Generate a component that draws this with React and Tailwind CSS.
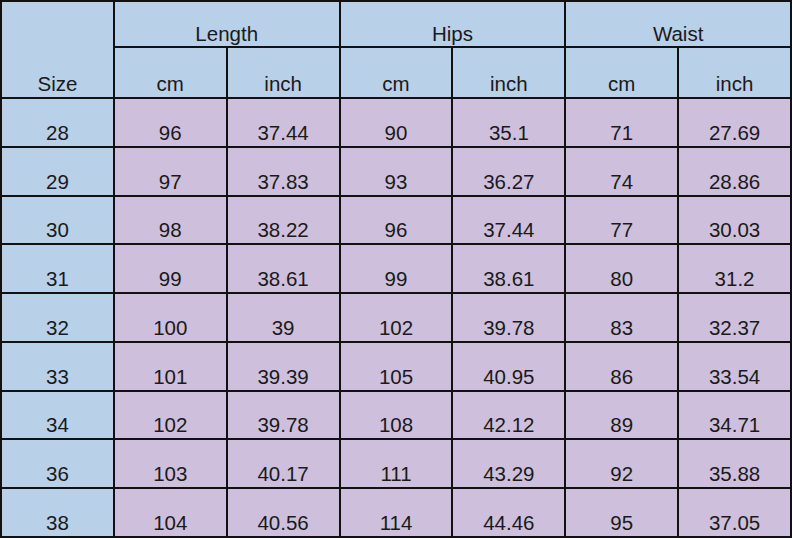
import React from "react";

const rows = [
  ["28", "96", "37.44", "90", "35.1", "71", "27.69"],
  ["29", "97", "37.83", "93", "36.27", "74", "28.86"],
  ["30", "98", "38.22", "96", "37.44", "77", "30.03"],
  ["31", "99", "38.61", "99", "38.61", "80", "31.2"],
  ["32", "100", "39", "102", "39.78", "83", "32.37"],
  ["33", "101", "39.39", "105", "40.95", "86", "33.54"],
  ["34", "102", "39.78", "108", "42.12", "89", "34.71"],
  ["36", "103", "40.17", "111", "43.29", "92", "35.88"],
  ["38", "104", "40.56", "114", "44.46", "95", "37.05"],
];

const cell = "flex items-end justify-center leading-[22px]";
const blue = "bg-[#b9d0e9]";
const pink = "bg-[#cec0dc]";

export default function App() {
  return (
    <div
      className="w-[792px] h-[538px] bg-[#111] p-[2px] grid grid-cols-7 grid-rows-[44px_49px_repeat(9,1fr)] gap-[2px] text-[20.5px] text-[#1a1a1a]"
      style={{ fontFamily: '"Liberation Sans", Arial, sans-serif' }}
    >
      <div className={`${cell} ${blue} row-span-2 pb-[2px]`}>Size</div>
      <div className={`${cell} ${blue} col-span-2 pb-[1px]`}>Length</div>
      <div className={`${cell} ${blue} col-span-2 pb-[1px]`}>Hips</div>
      <div className={`${cell} ${blue} col-span-2 pb-[1px]`}>Waist</div>
      {["cm", "inch", "cm", "inch", "cm", "inch"].map((t, i) => (
        <div key={i} className={`${cell} ${blue} pb-[2px]`}>
          {t}
        </div>
      ))}
      {rows.map((r) =>
        r.map((v, i) => (
          <div key={r[0] + "-" + i} className={`${cell} ${i === 0 ? blue : pink} pb-[2px]`}>
            {v}
          </div>
        ))
      )}
    </div>
  );
}
